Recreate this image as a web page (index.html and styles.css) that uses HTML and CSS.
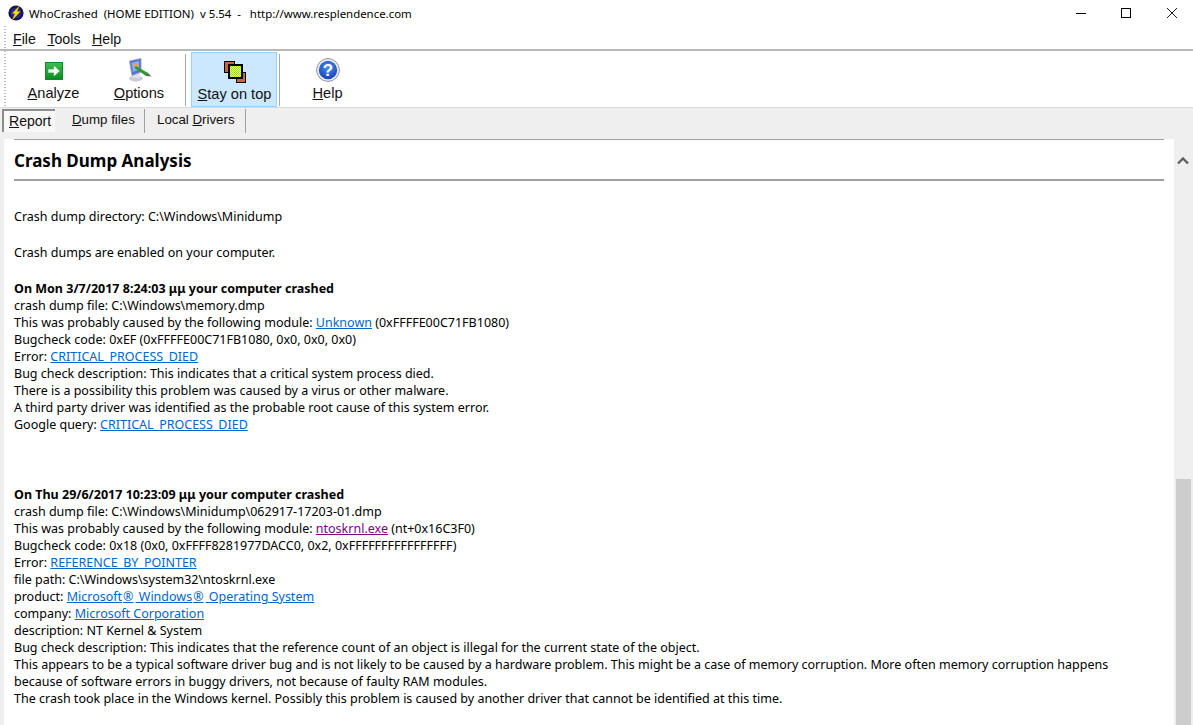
FILE: index.html
```html
<!DOCTYPE html>
<html lang="en">
<head>
<meta charset="utf-8">
<title>WhoCrashed</title>
<link rel="stylesheet" href="styles.css">
</head>
<body>
<div class="app">
  <header class="titlebar">
    <svg class="app-icon" width="16" height="16" viewBox="0 0 16 16"><circle cx="8" cy="8" r="7.6" fill="#14145c"/><circle cx="8" cy="8" r="5.5" fill="#26267e"/><path d="M11.5 .8L4 8.6H7L4 15.4L12.4 6.4H9Z" fill="#f8e010" stroke="#c8a000" stroke-width=".3"/></svg>
    <span class="title-text">WhoCrashed&nbsp; (HOME EDITION)&nbsp; v 5.54&nbsp; -&nbsp;&nbsp; http://www.resplendence.com</span>
    <div class="win-controls">
      <svg class="win-min" width="10" height="10" viewBox="0 0 10 10"><path d="M0 5.5H10" stroke="#000" fill="none"/></svg>
      <svg width="10" height="10" viewBox="0 0 10 10"><rect x=".5" y=".5" width="9" height="9" stroke="#000" fill="none"/></svg>
      <svg width="10" height="10" viewBox="0 0 10 10"><path d="M0 0L10 10M10 0L0 10" stroke="#000" stroke-width=".9" fill="none"/></svg>
    </div>
  </header>
  <nav class="menubar">
    <span class="menu-item"><u>F</u>ile</span>
    <span class="menu-item"><u>T</u>ools</span>
    <span class="menu-item"><u>H</u>elp</span>
  </nav>
  <div class="toolbar">
    <button class="tool tool-analyze">
      <svg width="18" height="18" viewBox="0 0 18 18"><defs><linearGradient id="gr" x1="0" y1="0" x2="0" y2="1"><stop offset="0" stop-color="#3fbf4f"/><stop offset="1" stop-color="#0a8a22"/></linearGradient></defs><rect x=".5" y=".5" width="17" height="17" fill="url(#gr)" stroke="#0e8a28"/><path d="M3.5 7.5H9V4L14.5 9L9 14V10.5H3.5Z" fill="#fff" stroke="#cfe8cf" stroke-width=".5"/></svg>
      <span><u>A</u>nalyze</span>
    </button>
    <button class="tool tool-options">
      <svg width="26" height="24" viewBox="0 0 26 24"><ellipse cx="10" cy="20.5" rx="7" ry="3" fill="#c8cad8"/><path d="M7 14h7v6H7z" fill="#dfe0ea"/><path d="M3.5 3L15 .5V14L6 17.5Z" fill="#5f6fd8" stroke="#8f9bb5" stroke-width=".8"/><path d="M5.5 4.8L13 3V11.5L7 14Z" fill="#7db4f2"/><path d="M7 7L10 4.8L13 7.5L10 9.5Z" fill="#f2a528"/><path d="M10 8L22 15L20 18L8.5 10Z" fill="#2f9a34"/><path d="M21.5 14.6L25.5 18.5L19.8 18Z" fill="#5d6b5d"/></svg>
      <span><u>O</u>ptions</span>
    </button>
    <i class="tool-sep"></i>
    <button class="tool tool-stay">
      <svg width="24" height="24" viewBox="0 0 24 24"><defs><pattern id="chk" width="2" height="2" patternUnits="userSpaceOnUse"><rect width="2" height="2" fill="#9fe000"/><rect width="1" height="1" fill="#e6ff90"/><rect x="1" y="1" width="1" height="1" fill="#e6ff90"/></pattern></defs><rect x="1.5" y="1.5" width="10" height="11" fill="#c8683c" stroke="#000"/><rect x="13.5" y="12.5" width="9" height="10" fill="#c8683c" stroke="#000"/><rect x="6" y="5" width="13" height="13" fill="url(#chk)" stroke="#000" stroke-width="2"/></svg>
      <span><u>S</u>tay on top</span>
    </button>
    <i class="tool-sep"></i>
    <button class="tool tool-help">
      <svg width="24" height="24" viewBox="0 0 24 24"><defs><radialGradient id="bl" cx=".5" cy=".35" r=".7"><stop offset="0" stop-color="#4d8ff0"/><stop offset="1" stop-color="#123fb0"/></radialGradient></defs><circle cx="12" cy="12" r="11.4" fill="#eceef4" stroke="#8c93a4"/><circle cx="12" cy="12" r="9.2" fill="url(#bl)"/><text x="12" y="18" class="help-mark">?</text></svg>
      <span><u>H</u>elp</span>
    </button>
  </div>
  <div class="tabs">
    <span class="tab tab-active"><u>R</u>eport</span>
    <span class="tab tab-dump"><u>D</u>ump files</span>
    <span class="tab tab-local">Local <u>D</u>rivers</span>
  </div>
  <div class="viewport">
    <main class="report">
      <h1>Crash Dump Analysis</h1>
      <p class="p-first">Crash dump directory: C:\Windows\Minidump</p>
      <p class="p-gap">Crash dumps are enabled on your computer.</p>
      <section class="crash">
        <p class="crash-head">On Mon 3/7/2017 8:24:03 μμ your computer crashed</p>
        <p>crash dump file: C:\Windows\memory.dmp</p>
        <p>This was probably caused by the following module: <a href="#">Unknown</a> (0xFFFFE00C71FB1080)</p>
        <p>Bugcheck code: 0xEF (0xFFFFE00C71FB1080, 0x0, 0x0, 0x0)</p>
        <p>Error: <a href="#">CRITICAL_PROCESS_DIED</a></p>
        <p>Bug check description: This indicates that a critical system process died.</p>
        <p>There is a possibility this problem was caused by a virus or other malware.</p>
        <p>A third party driver was identified as the probable root cause of this system error.</p>
        <p>Google query: <a href="#">CRITICAL_PROCESS_DIED</a></p>
      </section>
      <section class="crash crash-next">
        <p class="crash-head">On Thu 29/6/2017 10:23:09 μμ your computer crashed</p>
        <p>crash dump file: C:\Windows\Minidump\062917-17203-01.dmp</p>
        <p>This was probably caused by the following module: <a href="#" class="visited">ntoskrnl.exe</a> (nt+0x16C3F0)</p>
        <p>Bugcheck code: 0x18 (0x0, 0xFFFF8281977DACC0, 0x2, 0xFFFFFFFFFFFFFFFF)</p>
        <p>Error: <a href="#">REFERENCE_BY_POINTER</a></p>
        <p>file path: C:\Windows\system32\ntoskrnl.exe</p>
        <p>product: <a href="#">Microsoft<span class="reg">®</span> Windows<span class="reg">®</span> Operating System</a></p>
        <p>company: <a href="#">Microsoft Corporation</a></p>
        <p>description: NT Kernel &amp; System</p>
        <p>Bug check description: This indicates that the reference count of an object is illegal for the current state of the object.</p>
        <p>This appears to be a typical software driver bug and is not likely to be caused by a hardware problem. This might be a case of memory corruption. More often memory corruption happens because of software errors in buggy drivers, not because of faulty RAM modules.</p>
        <p>The crash took place in the Windows kernel. Possibly this problem is caused by another driver that cannot be identified at this time.</p>
      </section>
    </main>
    <aside class="scrollbar">
      <svg class="scroll-up" width="12" height="8" viewBox="0 0 12 8"><path d="M1 6.5L6 1.5L11 6.5" stroke="#606060" stroke-width="2.4" fill="none"/></svg>
      <div class="scroll-thumb"></div>
    </aside>
  </div>
</div>
</body>
</html>
```
FILE: styles.css
```css
* { box-sizing: border-box; }
html, body { margin: 0; height: 100%; overflow: hidden; }
body { background: #fff; color: #000; font-family: "Noto Sans", sans-serif; }
.app { display: flex; flex-direction: column; height: 725px; width: 1193px; }

.titlebar { display: flex; align-items: center; height: 26px; padding-left: 8px; font-size: 11.43px; color: #000; }
.app-icon { flex: none; }
.title-text { margin-left: 5px; white-space: nowrap; }
.win-controls { margin-left: auto; display: flex; gap: 36px; padding-right: 16px; }
.win-min { margin-right: -1px; }

.menubar, .toolbar { background: repeating-linear-gradient(#bdbdbd 0 1px, transparent 1px 3px) 4px 0 / 2px 100% no-repeat; }
.menubar { display: flex; height: 25px; padding: 2px 0 0 13px; gap: 11.5px; align-items: center; border-bottom: 2px solid #b9b9b9; font: 14.2px "Liberation Sans", sans-serif; }
.menu-item { color: #111; }

.toolbar { display: flex; height: 57px; padding-left: 10px; align-items: stretch; border-bottom: 1px solid #d9d9d9; }
.tool { display: flex; flex-direction: column; align-items: center; border: 0; background: none; padding: 0; font: 14.6px/17px "Liberation Sans", sans-serif; color: #111; }
.tool svg { flex: none; }
.tool span { white-space: nowrap; }
.tool-analyze { width: 86px; padding: 11px 0 0 1px; gap: 5px; }
.tool-options { width: 86px; padding-top: 7px; gap: 3px; }
.tool-stay { width: 86px; padding: 7px 0 0 1px; gap: 2px; background: #cce8ff; border: 1px solid #99d1ff; margin: 1px 1px 0 5px; }
.tool-help { width: 94px; padding: 7px 0 0 1px; gap: 3px; }
.tool-sep { width: 1px; margin: 3px 0 1px 3px; background: #a8a8a8; }
.tool-stay + .tool-sep { margin-left: 1px; }
.help-mark { font: bold 17px "Liberation Sans", sans-serif; fill: #fff; text-anchor: middle; }

.tabs { display: flex; height: 31px; padding: 1px 0 0 2px; background: #efefef; font: 13.3px "Liberation Sans", sans-serif; align-items: flex-start; }
.tab { height: 24px; padding: 3px 0 0; border-right: 1px solid #a0a0a0; color: #111; white-space: nowrap; }
.tab-dump { width: 85px; padding-left: 12px; }
.tab-local { width: 101px; padding-left: 12px; }
.tab-active { width: 53px; height: 23px; padding: 2px 0 0 5px; margin-right: 5px; font-size: 14px; background: #f8f8f8; border-style: solid; border-width: 2px 0 0 2px; border-color: #8c8c8c; }

.viewport { flex: 1; min-height: 0; display: flex; background: #efefef; padding-left: 4px; }
.report { width: 1170px; flex: none; overflow: hidden; background: #fff; padding: 0 10px; font-size: 12.5px; line-height: 17px; color: #000; }
.report h1 { margin: 0; height: 42px; padding-top: 8px; border-top: 1px solid #a0a0a0; border-bottom: 2px solid #a0a0a0; font-size: 17px; font-weight: 700; line-height: 26px; }
.report p { margin: 0; padding-right: 10px; }
.report .p-first { margin-top: 27px; }
.report .p-gap { margin-top: 19px; }
.crash { margin-top: 19px; }
.crash-next { margin-top: 53px; }
.crash-head { font-weight: 700; }
a { color: #0066cc; text-decoration: underline; }
a.visited { color: #800080; }
.reg { margin: 0 2px 0 1px; }

.scrollbar { flex: 1; display: flex; flex-direction: column; align-items: center; padding-top: 18px; }
.scroll-up { flex: none; margin-left: -1px; }
.scroll-thumb { width: 15px; margin: 314px 0 0 -1px; flex: 1; background: #cdcdcd; }
```
